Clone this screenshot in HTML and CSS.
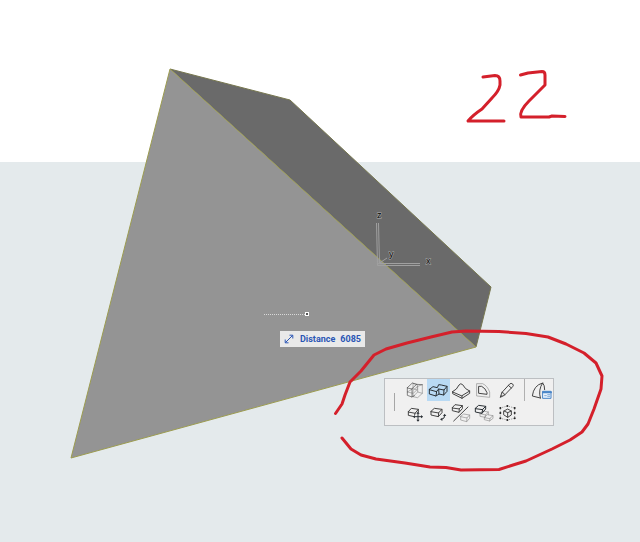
FILE: index.html
```html
<!DOCTYPE html>
<html lang="en">
<head>
<meta charset="utf-8">
<title>3D viewport</title>
<link rel="stylesheet" href="styles.css">
</head>
<body>
<main class="viewport">
  <svg class="scene" viewBox="0 0 640 542" role="img" aria-label="Prism in 3D view">
    <polygon class="face-side" points="170,69 290,100 491,287 476,347"/>
    <polygon class="face-front" points="170,69 476,347 71,458"/>
    <path class="edge-soft" d="M170 69L290 100L491 287L476 347"/>
    <path class="edge" d="M170 69L476 347L71 458Z"/>
    <path class="axis" d="M376.500 223L377.500 265.500H420M378.500 223L379.500 263.500H420M378 264L387 258"/>
    <text class="axis-label" x="377" y="218">z</text>
    <text class="axis-label" x="389" y="257">y</text>
    <text class="axis-label" x="426" y="264">x</text>
    <path class="guide" d="M264 314.500H305"/>
    <rect class="guide-node" x="305.500" y="312.500" width="3" height="3"/>
  </svg>

  <label class="tracker">
    <svg class="tracker-icon" viewBox="0 0 10 10" aria-hidden="true"><path d="M1.500 8.500L8.500 1.500M5.500 1.200H8.800V4.500M1.200 5.500V8.800H4.500"/></svg>
    <span>Distance</span>
    <output>6085</output>
  </label>

  <div class="palette" role="toolbar" aria-label="Pet palette">
    <span class="grip"></span>
    <div class="tools">
      <button class="tool" aria-label="Extrude"><svg viewBox="0 0 69 66">
        <path class="pale" d="M27 13L40 17V31L28 43L10 39M27 13V29L10 39M27 29L40 33M41 22L55 17V43L41 56L27 53V34L41 22M41 22V39L55 43M41 39L27 53"/>
        <path d="M10 26L25 12L38 16L24 29ZM10 26V49L24 54V29M24 54L31 50M38 16L55 17"/></svg></button>
      <button class="tool active" aria-label="Merge" aria-pressed="true"><svg viewBox="0 0 69 66">
        <path class="bold" d="M7 31L18 23L31 26L35 17L43 18L60 22L51 33L35 30L29 37ZM7 31V45L27 51L29 37M27 51L36 45L50 48L60 37V22M51 33L50 48M35 30L36 45"/></svg></button>
      <button class="tool" aria-label="Smooth"><svg viewBox="0 0 69 66">
        <path class="mid" d="M8 38Q21 32 27 18Q32 11 38 17Q45 31 59 36L36 50ZM8 38V44L36 58L59 43V36M36 50V58"/></svg></button>
      <button class="tool" aria-label="Offset"><svg viewBox="0 0 69 66">
        <path class="pale" d="M12 14H29Q43 20 50 39V55L12 51Z"/>
        <path class="mid" d="M18 22H26Q37 27 42 41V46L18 43Z"/></svg></button>
      <button class="tool" aria-label="Edit"><svg viewBox="0 0 69 66">
        <path class="mid" d="M13 54L18 40L41 15Q45 11 50 15Q54 19 50 23L26 48ZM37 19L46 27M18 40Q25 41 26 48M14 52L18 50"/></svg></button>
      <button class="tool" aria-label="Move"><svg viewBox="0 0 69 66">
        <path class="mid" d="M13 29L22 19L43 22L34 33ZM13 29V40L30 44M34 33L32 38M43 22V29"/>
        <path class="bold" d="M42 32V56M30 44H54"/>
        <path class="solid" d="M42 29L47 35H37ZM42 59L47 53H37ZM27 44L33 39V49ZM57 44L51 39V49Z"/></svg></button>
      <button class="tool" aria-label="Rotate"><svg viewBox="0 0 69 66">
        <path class="mid" d="M12 28L22 19L45 22L35 32ZM12 28V39L34 44L35 32M45 22V32L34 44"/>
        <path class="bold" d="M53 40Q54 50 45 52"/>
        <path class="solid" d="M53 35L58 42H48ZM39 52L46 47V57Z"/></svg></button>
      <button class="tool" aria-label="Mirror"><svg viewBox="0 0 69 66">
        <path class="pale" d="M32 43L41 36L59 39L51 47ZM32 43V54L50 59L51 47M59 39V49L50 59"/>
        <path class="mid" d="M7 17L15 8L37 11L28 20ZM7 17V26L27 31L28 20M37 11V20L27 31M11 57L54 15"/></svg></button>
      <button class="tool" aria-label="Multiply"><svg viewBox="0 0 69 66">
        <path class="pale" d="M21 34L29 27L46 30L38 38ZM21 34V43L37 46L38 38M46 30V38M34 46L43 38L60 41L51 49ZM34 46V53L50 57L51 49M60 41V49L50 57"/>
        <path class="bold" d="M7 19L17 10L38 13L29 22ZM7 19V30L27 34L29 22M38 13V21L27 34"/></svg></button>
      <button class="tool" aria-label="Transform"><svg viewBox="0 0 69 66">
        <path class="mid" d="M24 27L35 21L46 27V39L35 46L24 39ZM24 27L35 32L46 27M35 32V46"/>
        <path class="dashed" d="M13 18L34 12L56 18V49L34 54L13 49Z"/>
        <path class="dots" d="M13 18h.1M34 12h.1M56 18h.1M13 49h.1M34 54h.1M56 49h.1M13 33h.1M56 33h.1"/></svg></button>
    </div>
    <span class="divider"></span>
    <button class="tool settings" aria-label="Morph settings"><svg viewBox="0 0 69 66">
      <path class="mid" d="M44 32Q44 18 38 12Q11 19 7 51L31 57M38 12Q24 32 31 57"/>
      <path class="window" d="M39 37H63V58H39Z"/>
      <path class="window-bar" d="M39 40H63"/>
      <path class="window-text" d="M44 50H49M53 47H59M53 52H59"/></svg></button>
  </div>

  <svg class="scene ink" viewBox="0 0 640 542" role="img" aria-label="Hand-drawn note 22 and circle">
    <path class="pen-note" d="M483 77L495 75.500Q500 75.500 500 81V85Q499 91 492 98L482 109Q473 115 468 121L504 121"/>
    <path class="pen-note" d="M520.500 75L528 73L542 71.500Q545 71.500 545 75V85L529 101Q519 111 521 117L549 117L552 116L565 116.500"/>
    <path class="pen-circle" d="M335.500 413.500L342 404L345 395L350 382L361 371L374 355L386 349L407 343L431 337L452 332L466 331L499 331.500L526 333.500L548 337L566 344L584 353L596 363L602 376L601 389L594 409L588 424L582 432L570 440L552 449L526 461L513 465L499 469.500L461 470L446 467.500L430 467L405 463L376 459L361 455L351 449L342 438"/>
  </svg>
</main>
</body>
</html>
```
FILE: styles.css
```css
* {
  box-sizing: border-box;
}

body {
  margin: 0;
  background: #e4eaec;
  font-family: "Open Sans", "Noto Sans", sans-serif;
}

.viewport {
  position: relative;
  width: 100%;
  aspect-ratio: 640 / 542;
  overflow: hidden;
  background: linear-gradient(#ffffff 29.900%, #e4eaec 29.900%);
}

.scene {
  position: absolute;
  inset: 0;
  width: 100%;
  height: 100%;
}

.face-side {
  fill: #6a6a6a;
}

.face-front {
  fill: #949494;
}

.edge,
.edge-soft {
  fill: none;
  stroke: #9c9c50;
  stroke-linejoin: round;
}

.edge-soft {
  stroke: #77774f;
}

.axis {
  fill: none;
  stroke: #a0a0a0;
}

.axis-label {
  fill: #000000;
  stroke: #b0b0b0;
  stroke-width: 1px;
  paint-order: stroke;
  font: 9px "Liberation Sans", sans-serif;
}

.guide {
  stroke: #d8d8d8;
  stroke-dasharray: 1 1;
}

.guide-node {
  fill: #555555;
  stroke: #ffffff;
}

.tracker {
  position: absolute;
  left: 43.750%;
  top: 61%;
  display: flex;
  align-items: center;
  gap: 5px;
  height: 16px;
  padding: 0 4px;
  background: #e9e9e9;
  color: #2b56b5;
  font-family: Roboto, sans-serif;
  font-size: 9px;
  font-weight: 700;
  line-height: 16px;
}

.tracker-icon {
  width: 10px;
  height: 10px;
  margin-right: 1px;
  fill: none;
  stroke: #2b56b5;
}

.palette {
  position: absolute;
  left: 60%;
  top: 69.750%;
  display: flex;
  align-items: flex-start;
  border: 1px solid #bcbfc2;
  background: #f0f0f0;
}

.grip {
  align-self: center;
  width: 1px;
  height: 18px;
  margin: 0 9px;
  background: #a6a6a6;
}

.tools {
  display: grid;
  grid-template-columns: repeat(5, 23px);
  row-gap: 1px;
  padding-bottom: 1px;
}

.tool {
  width: 23px;
  height: 22px;
  padding: 0;
  border: 0;
  background: none;
}

.tool.active {
  background: #b9daf4;
}

.tool svg {
  display: block;
  width: 100%;
  height: 100%;
  fill: none;
  stroke: #4c4c4c;
  stroke-width: 2px;
  stroke-linejoin: round;
  stroke-linecap: round;
}

.tool .pale {
  stroke: #909090;
}

.tool .mid {
  stroke: #444444;
  stroke-width: 3px;
}

.tool .bold {
  stroke: #2b3136;
  stroke-width: 3px;
}

.tool .solid {
  fill: #2b3136;
  stroke: none;
}

.tool .dashed {
  stroke: #666666;
  stroke-width: 2px;
  stroke-dasharray: 1 6;
}

.tool .dots {
  stroke: #222222;
  stroke-width: 6px;
}

.tool .window {
  fill: #e8f2fc;
  stroke: #4a86c8;
  stroke-width: 3px;
}

.tool .window-bar {
  stroke: #4a86c8;
  stroke-width: 6px;
}

.tool .window-text {
  stroke: #4a86c8;
}

.divider {
  width: 1px;
  height: 22px;
  margin: 0 5px;
  background: #b0b0b0;
}

.ink {
  pointer-events: none;
  fill: none;
  stroke: #d4202b;
  stroke-linecap: round;
  stroke-linejoin: round;
}

.pen-note,
.pen-circle {
  stroke-width: 3px;
}
```
